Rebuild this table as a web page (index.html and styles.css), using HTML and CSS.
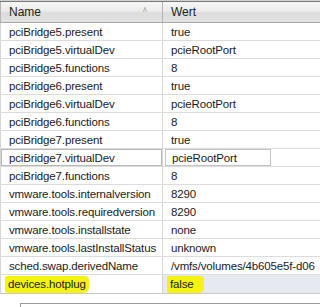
FILE: index.html
```html
<!DOCTYPE html>
<html lang="de">
<head>
    <meta charset="UTF-8">
    <title>Konfigurationsparameter</title>
    <link rel="stylesheet" href="styles.css">
</head>
<body>
    <div class="grid">
        <div class="head">
            <div class="head-cell">Name <span class="sort">&#x2227;</span></div>
            <div class="head-cell">Wert</div>
        </div>
        <div class="row"><div class="cell">pciBridge5.present</div><div class="cell">true</div></div>
        <div class="row"><div class="cell">pciBridge5.virtualDev</div><div class="cell">pcieRootPort</div></div>
        <div class="row"><div class="cell">pciBridge5.functions</div><div class="cell">8</div></div>
        <div class="row"><div class="cell">pciBridge6.present</div><div class="cell">true</div></div>
        <div class="row"><div class="cell">pciBridge6.virtualDev</div><div class="cell">pcieRootPort</div></div>
        <div class="row"><div class="cell">pciBridge6.functions</div><div class="cell">8</div></div>
        <div class="row"><div class="cell">pciBridge7.present</div><div class="cell">true</div></div>
        <div class="row edit"><div class="cell">pciBridge7.virtualDev</div><div class="cell"><span class="box">pcieRootPort</span></div></div>
        <div class="row"><div class="cell">pciBridge7.functions</div><div class="cell">8</div></div>
        <div class="row"><div class="cell">vmware.tools.internalversion</div><div class="cell">8290</div></div>
        <div class="row"><div class="cell">vmware.tools.requiredversion</div><div class="cell">8290</div></div>
        <div class="row"><div class="cell">vmware.tools.installstate</div><div class="cell">none</div></div>
        <div class="row"><div class="cell">vmware.tools.lastInstallStatus</div><div class="cell">unknown</div></div>
        <div class="row"><div class="cell">sched.swap.derivedName</div><div class="cell">/vmfs/volumes/4b605e5f-d06</div></div>
        <div class="row selected">
            <div class="cell"><span class="marker marker-name">devices.hotplug</span></div>
            <div class="cell"><span class="marker marker-value">false</span></div>
        </div>
    </div>
    <div class="footer">
        <div class="input-box"></div>
    </div>
</body>
</html>
```

FILE: styles.css
```css
html, body {
    height: 307px;
    overflow: hidden;
}

body {
    margin: 0;
    font-family: "Liberation Sans", Arial, sans-serif;
    font-size: 11px;
    color: #1a1a1a;
    background: #fff;
    width: 320px;
}

.grid {
    border-top: 1px solid #d0d0d0;
}

.head {
    display: grid;
    grid-template-columns: 162px 1fr;
    height: 20px;
    border-top: 1px solid #7a7a7a;
    border-bottom: 1px solid #a8a8a8;
    background: linear-gradient(#f6f6f6, #ececec 45%, #dcdcdc 55%, #e2e2e2);
}

    .head-cell {
        display: flex;
        align-items: center;
        padding-left: 8px;
        border-left: 1px solid #b4b4b4;
        font-size: 12px;
        color: #222;
        position: relative;
    }

        .head-cell .sort {
            position: absolute;
            right: 14px;
            top: 3px;
            font-size: 8px;
            color: #a8a8a8;
        }

.row {
    display: grid;
    grid-template-columns: 162px 1fr;
    height: 18px;
    border-bottom: 1px solid #dcdcdc;
    box-sizing: border-box;
}

    .row .cell {
        display: flex;
        align-items: center;
        padding-left: 8px;
        border-left: 1px solid #d6d6d6;
        white-space: nowrap;
        overflow: hidden;
        font-size: 11.5px;
        letter-spacing: -0.15px;
    }

    .row.edit .cell:first-child {
        box-shadow: inset 0 0 0 1px #b8b8b8;
    }

    .row.edit .cell .box {
        display: flex;
        align-items: center;
        height: 100%;
        width: 106px;
        margin-left: -6px;
        padding-left: 6px;
        box-sizing: border-box;
        border: 1px solid #c4c4c4;
    }

    .row.selected {
        height: 19px;
        border-bottom: 1px solid #c8c8c8;
    }

        .row.selected .cell {
            overflow: visible;
        }

        .row.selected .cell:last-child {
            background: #e6eaf0;
        }

.marker {
    background: #f4f410;
    border-radius: 2px 4px 5px 3px;
    padding: 2px 3px 3px 3px;
    margin-left: -4px;
}

.marker-value {
    padding-right: 10px;
}

.footer {
    padding: 9px 0 0 20px;
}

    .input-box {
        border-top: 1px solid #9a9a9a;
        border-left: 1px solid #9a9a9a;
        height: 10px;
    }
```
